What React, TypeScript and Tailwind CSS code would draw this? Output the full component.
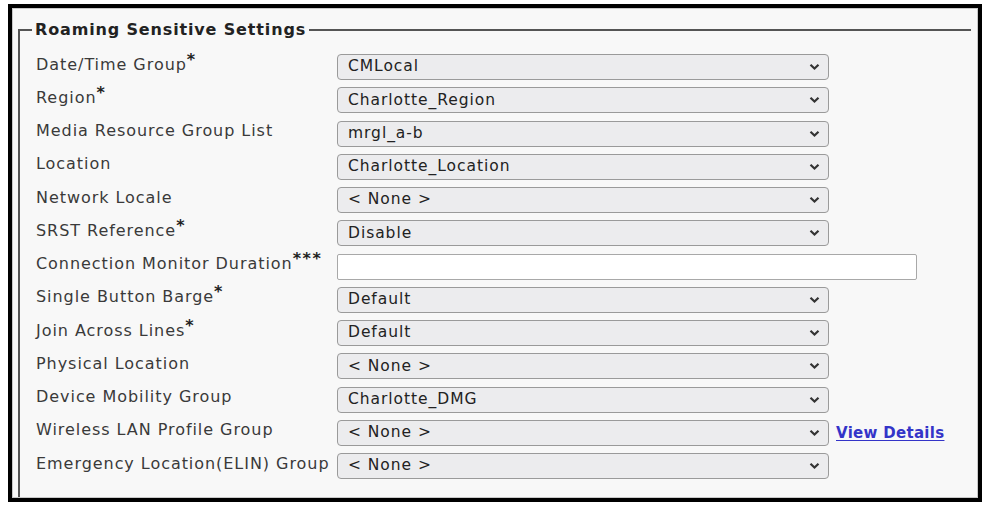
import React from 'react';

type Row = {
  label: string;
  mark?: string;
  value?: string;
  kind?: 'select' | 'text';
  link?: string;
};

const rows: Row[] = [
  { label: 'Date/Time Group', mark: '*', value: 'CMLocal' },
  { label: 'Region', mark: '*', value: 'Charlotte_Region' },
  { label: 'Media Resource Group List', value: 'mrgl_a-b' },
  { label: 'Location', value: 'Charlotte_Location' },
  { label: 'Network Locale', value: '< None >' },
  { label: 'SRST Reference', mark: '*', value: 'Disable' },
  { label: 'Connection Monitor Duration', mark: '***', kind: 'text' },
  { label: 'Single Button Barge', mark: '*', value: 'Default' },
  { label: 'Join Across Lines', mark: '*', value: 'Default' },
  { label: 'Physical Location', value: '< None >' },
  { label: 'Device Mobility Group', value: 'Charlotte_DMG' },
  { label: 'Wireless LAN Profile Group', value: '< None >', link: 'View Details' },
  { label: 'Emergency Location(ELIN) Group', value: '< None >' },
];

function Chevron() {
  return (
    <svg width="11" height="8" viewBox="0 0 11 8" className="shrink-0">
      <path d="M1.5 1.8 L5.5 5.6 L9.5 1.8" fill="none" stroke="#333" strokeWidth="2.2" />
    </svg>
  );
}

function Field({ row }: { row: Row }) {
  return (
    <div className="flex items-center h-[26px]">
      <div className="w-[301px] shrink-0 -mt-[5px] text-[16px] tracking-[0.95px] text-[#3a3a3a] leading-none whitespace-nowrap">
        {row.label}
        {row.mark && (
          <span className="relative -top-[5px] font-bold text-[#222] text-[16px] tracking-[1.5px]">{row.mark}</span>
        )}
      </div>
      {row.kind === 'text' ? (
        <div className="w-[580px] h-[26px] bg-white border border-[#a8a8a8] rounded-[2px]" />
      ) : (
        <div className="w-[492px] h-[26px] bg-[#ececee] border border-[#9a9a9a] rounded-[4px] flex items-center justify-between pl-[10px] pr-[8px] text-[15.5px] tracking-[0.95px] text-[#222]">
          <span>{row.value}</span>
          <Chevron />
        </div>
      )}
      {row.link && (
        <a className="ml-[7px] text-[15px] tracking-[0.3px] font-semibold text-[#3434c8] underline underline-offset-2">{row.link}</a>
      )}
    </div>
  );
}

export default function App() {
  return (
    <div className="w-[986px] h-[505px] bg-white pl-[8px] pt-[4px]" style={{ fontFamily: '"DejaVu Sans", Verdana, sans-serif' }}>
      <div className="w-[974px] h-[498px] border-4 border-black bg-[#f8f8f8]">
        <div className="h-full border border-[#c8c8c8] pl-[5px] pr-[6px] pt-[20px]">
          <div className="relative h-full border-l-2 border-t-2 border-[#555] pl-[16px] pt-[23px]">
            <div className="absolute -top-[11px] left-[12px] bg-[#f8f8f8] px-[3px] text-[16px] tracking-[0.85px] font-bold text-[#222] leading-[20px]">
              Roaming Sensitive Settings
            </div>
            <div className="flex flex-col gap-[7.25px]">
              {rows.map((r) => (
                <Field key={r.label} row={r} />
              ))}
            </div>
          </div>
        </div>
      </div>
    </div>
  );
}
